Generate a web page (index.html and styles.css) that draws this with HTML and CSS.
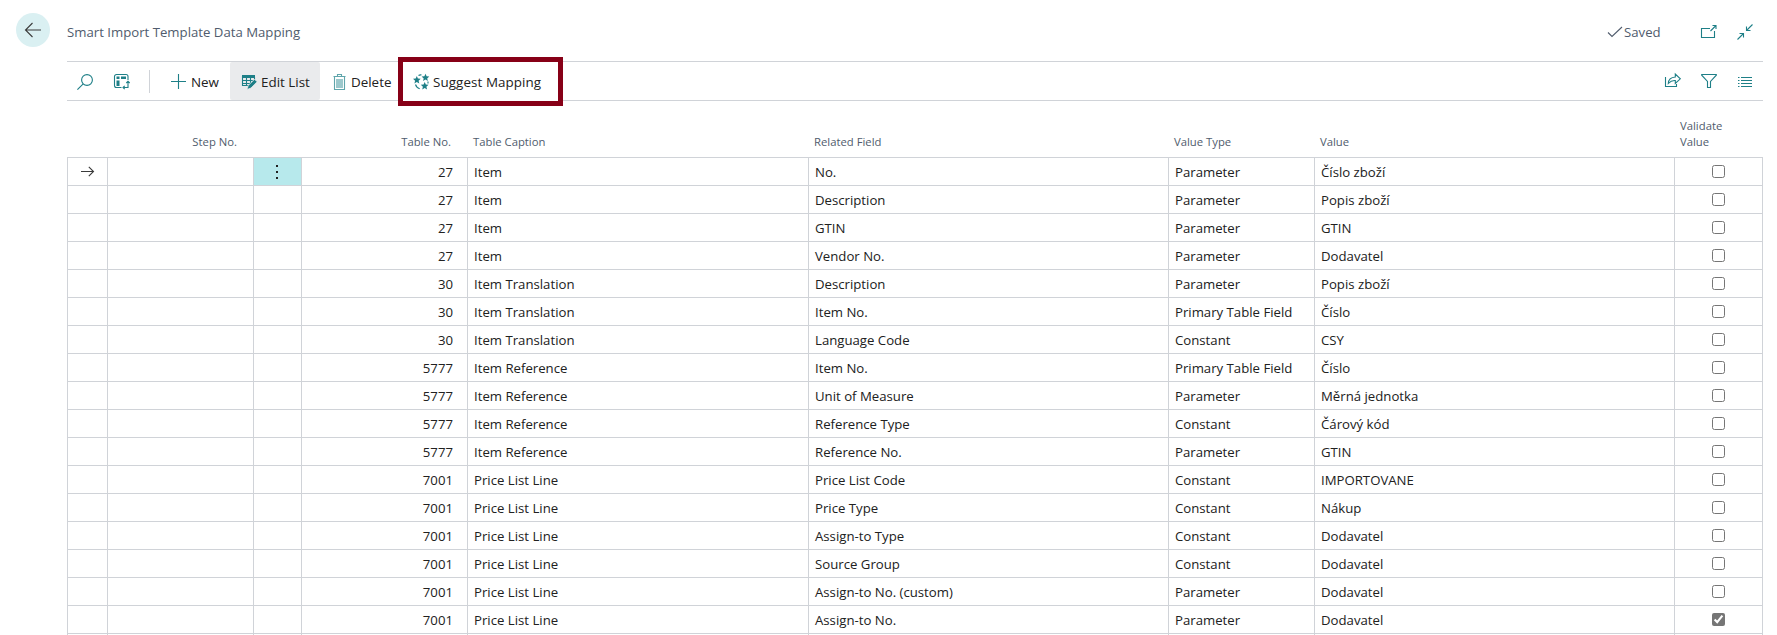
FILE: index.html
```
<!DOCTYPE html>
<html lang="en">
<head>
	<meta charset="UTF-8">
	<title>Smart Import Template Data Mapping</title>
	<link rel="stylesheet" href="styles.css">
</head>
<body>
	<header class="page-header">
		<a class="back">
			<svg width="18" height="16" viewBox="0 0 18 16"><path d="M17 8H1.5M8.5 1L1.5 8l7 7"/></svg>
		</a>
		<h1 class="title">Smart Import Template Data Mapping</h1>
		<div class="header-nav">
			<svg class="check" width="16" height="12" viewBox="0 0 16 12"><path d="M1 6.500L5 10.500L15 1"/></svg>
			<span class="saved">Saved</span>
			<svg class="icon popout" width="16" height="16" viewBox="0 0 16 16"><path d="M9 4.500H.5v9h13V7M9.500 7L15 1.500M11.500 1.500H15V5"/></svg>
			<svg class="icon" width="16" height="16" viewBox="0 0 16 16"><path d="M.5 15.500l6-6M2.500 9.500h4v4M15.500.5l-6 6M9.500 2.500v4h4"/></svg>
		</div>
	</header>

	<div class="toolbar">
		<a class="tool tool-search"><svg class="icon" width="16" height="16" viewBox="0 0 16 16"><circle cx="10" cy="6" r="5.400"/><path d="M6.200 9.800L.4 15.600"/></svg></a>
		<a class="tool tool-layout">
			<svg class="icon" width="16" height="16" viewBox="0 0 16 16">
				<path d="M7.500 13.500h-5a2 2 0 0 1-2-2v-9a2 2 0 0 1 2-2h9.500a2 2 0 0 1 2 2V6" />
				<path class="solid" d="M2.500 2.500h3v2.500h-3zM7 2.500h5v2.500H7zM2.500 6.500h3V12h-3z"/>
				<path d="M14 7.500v6H9M12.300 9l1.700-1.700L15.700 9M10.700 11.800L9 13.500l1.700 1.700"/>
			</svg>
		</a>
		<span class="divider"></span>
		<a class="tool tool-new"><svg class="icon" width="16" height="16" viewBox="0 0 16 16"><path d="M7.500 0v15M0 7.500h15"/></svg>New</a>
		<a class="tool tool-edit active">
			<svg class="icon" width="16" height="16" viewBox="0 0 16 16">
				<path class="solid" d="M1 1h13v3H1z"/>
				<path d="M1.500 2v9.500H7M5.500 4v7.500M9.500 4v6M13.500 3v3M1.500 6.500h11M1.500 9.500h8"/>
				<path class="pencil" d="M6 15.500l1.200-4 6.300-6.300 2.600 2.600-6.200 6.300z"/>
			</svg>Edit List
		</a>
		<a class="tool tool-delete">
			<svg class="icon bin" width="16" height="16" viewBox="0 0 16 16">
				<path class="fill" d="M5 5h7v9H5z"/>
				<path d="M3.500 3v12.500h10V3M2.500 2.500h12M6.500 2.500v-2h4v2"/>
			</svg>Delete
		</a>
		<a class="tool tool-suggest">
			<svg class="icon" width="16" height="16" viewBox="0 0 16 16">
				<path class="solid" d="M3.800 2l1.100 2.600 2.800.2-2.100 1.900.7 2.700-2.500-1.500-2.400 1.500.7-2.700L0 4.800l2.700-.2zM12.500-.3l1.100 2.600 2.700.2-2.100 1.900.7 2.700-2.400-1.500-2.500 1.500.7-2.700-2.100-1.900 2.800-.2zM11.700 8l1.100 2.600 2.700.2-2.100 1.900.7 2.700-2.400-1.500-2.500 1.500.7-2.700-2.100-1.900 2.800-.2z"/>
				<path d="M5.500 1.500Q7 .5 8.500 1M2.500 10.500q.8 3 4.200 4.200M15 7.500v2"/>
			</svg>Suggest Mapping
		</a>
		<div class="toolbar-right">
			<svg class="icon" width="16" height="16" viewBox="0 0 16 16"><path d="M.5 4v9.500h11V11M3.300 10.500q.2-6 7-6.500V1l5 4.800-5 4.700V7.500q-4-.4-7 3z"/></svg>
			<svg class="icon" width="16" height="16" viewBox="0 0 16 16"><path d="M.7 1.500h14.600v.7L9.500 8.500v6h-3v-6L.7 2.200z"/></svg>
			<svg class="icon" width="16" height="16" viewBox="0 0 16 16"><path d="M1 4.500h1.500M4 4.500h11M1 7.500h1.500M4 7.500h11M1 10.500h1.500M4 10.500h11M1 13.500h1.500M4 13.500h11"/></svg>
		</div>
	</div>

	<table class="lines">
		<colgroup>
			<col class="c-select"><col class="c-step"><col class="c-menu"><col class="c-table"><col class="c-caption"><col class="c-field"><col class="c-type"><col class="c-value"><col class="c-validate">
		</colgroup>
		<thead>
			<tr><th></th><th class="num step">Step No.</th><th></th><th class="num">Table No.</th><th>Table Caption</th><th>Related Field</th><th>Value Type</th><th>Value</th><th>Validate Value</th></tr>
		</thead>
		<tbody>
			<tr>
				<td class="mark"><svg width="14" height="12" viewBox="0 0 14 12"><path d="M0 5.500h12.500M7.800.8l4.700 4.700-4.700 4.700"/></svg></td>
				<td></td>
				<td class="menu"><svg width="4" height="16" viewBox="0 0 4 16"><path d="M1 1h2v2H1zM1 7h2v2H1zM1 13h2v2H1z"/></svg></td>
				<td class="num">27</td><td>Item</td><td>No.</td><td>Parameter</td><td>Číslo zboží</td><td class="val"><input type="checkbox"></td>
			</tr>
			<tr><td></td><td></td><td></td><td class="num">27</td><td>Item</td><td>Description</td><td>Parameter</td><td>Popis zboží</td><td class="val"><input type="checkbox"></td></tr>
			<tr><td></td><td></td><td></td><td class="num">27</td><td>Item</td><td>GTIN</td><td>Parameter</td><td>GTIN</td><td class="val"><input type="checkbox"></td></tr>
			<tr><td></td><td></td><td></td><td class="num">27</td><td>Item</td><td>Vendor No.</td><td>Parameter</td><td>Dodavatel</td><td class="val"><input type="checkbox"></td></tr>
			<tr><td></td><td></td><td></td><td class="num">30</td><td>Item Translation</td><td>Description</td><td>Parameter</td><td>Popis zboží</td><td class="val"><input type="checkbox"></td></tr>
			<tr><td></td><td></td><td></td><td class="num">30</td><td>Item Translation</td><td>Item No.</td><td>Primary Table Field</td><td>Číslo</td><td class="val"><input type="checkbox"></td></tr>
			<tr><td></td><td></td><td></td><td class="num">30</td><td>Item Translation</td><td>Language Code</td><td>Constant</td><td>CSY</td><td class="val"><input type="checkbox"></td></tr>
			<tr><td></td><td></td><td></td><td class="num">5777</td><td>Item Reference</td><td>Item No.</td><td>Primary Table Field</td><td>Číslo</td><td class="val"><input type="checkbox"></td></tr>
			<tr><td></td><td></td><td></td><td class="num">5777</td><td>Item Reference</td><td>Unit of Measure</td><td>Parameter</td><td>Měrná jednotka</td><td class="val"><input type="checkbox"></td></tr>
			<tr><td></td><td></td><td></td><td class="num">5777</td><td>Item Reference</td><td>Reference Type</td><td>Constant</td><td>Čárový kód</td><td class="val"><input type="checkbox"></td></tr>
			<tr><td></td><td></td><td></td><td class="num">5777</td><td>Item Reference</td><td>Reference No.</td><td>Parameter</td><td>GTIN</td><td class="val"><input type="checkbox"></td></tr>
			<tr><td></td><td></td><td></td><td class="num">7001</td><td>Price List Line</td><td>Price List Code</td><td>Constant</td><td>IMPORTOVANE</td><td class="val"><input type="checkbox"></td></tr>
			<tr><td></td><td></td><td></td><td class="num">7001</td><td>Price List Line</td><td>Price Type</td><td>Constant</td><td>Nákup</td><td class="val"><input type="checkbox"></td></tr>
			<tr><td></td><td></td><td></td><td class="num">7001</td><td>Price List Line</td><td>Assign-to Type</td><td>Constant</td><td>Dodavatel</td><td class="val"><input type="checkbox"></td></tr>
			<tr><td></td><td></td><td></td><td class="num">7001</td><td>Price List Line</td><td>Source Group</td><td>Constant</td><td>Dodavatel</td><td class="val"><input type="checkbox"></td></tr>
			<tr><td></td><td></td><td></td><td class="num">7001</td><td>Price List Line</td><td>Assign-to No. (custom)</td><td>Parameter</td><td>Dodavatel</td><td class="val"><input type="checkbox"></td></tr>
			<tr><td></td><td></td><td></td><td class="num">7001</td><td>Price List Line</td><td>Assign-to No.</td><td>Parameter</td><td>Dodavatel</td><td class="val"><input type="checkbox" checked></td></tr>
			<tr><td></td><td></td><td></td><td></td><td></td><td></td><td></td><td></td><td></td></tr>
		</tbody>
	</table>
</body>
</html>
```
FILE: styles.css
```
/*--reset--*/
* {
	box-sizing: border-box;
}
html, body {
	height: 100%;
	overflow: hidden;
}
body {
	margin: 0;
	padding: 0 14px 0 67px;
	background: #fff;
	color: #212121;
	font: 13.2px/18px "Segoe UI", "Open Sans", "Noto Sans", sans-serif;
}
svg {
	display: block;
	flex: none;
	fill: none;
	stroke: #3b3b3b;
	stroke-width: 1.1;
}
svg.icon {
	stroke: #1e7f87;
	overflow: visible;
}
svg .solid {
	fill: #1e7f87;
	stroke: none;
}

/**
 * header
 */
.page-header {
	display: flex;
	align-items: center;
	height: 61px;
	padding-top: 2px;
	color: #505c6d;
}
.back {
	display: flex;
	align-items: center;
	justify-content: center;
	width: 34px;
	height: 34px;
	margin: -3px 17px 0 -51px;
	border-radius: 50%;
	background: #daf0f2;
}
.title {
	margin: 0;
	font-size: 13.2px;
	font-weight: normal;
}
.header-nav {
	display: flex;
	align-items: center;
	margin-left: auto;
	padding-right: 10px;
}
.check {
	stroke: #505c6d;
}
.saved {
	width: 78px;
	padding-left: 1px;
}
.popout {
	margin-right: 20px;
}

/**
 * toolbar
 */
.toolbar {
	display: flex;
	height: 40px;
	border-top: 1px solid #d0d3d8;
	border-bottom: 1px solid #d0d3d8;
	font-size: 13.4px;
}
.tool {
	position: relative;
	display: flex;
	align-items: center;
	gap: 4px;
	padding-top: 1px;
	white-space: nowrap;
}
.tool-search {
	width: 36px;
	padding-left: 10px;
}
.tool-layout {
	width: 46px;
	padding-left: 11px;
}
.divider {
	width: 1px;
	height: 23px;
	margin: 8px 10px 0 0;
	background: #d0d3d8;
}
.tool-new {
	width: 70px;
	padding-left: 11px;
}
.tool-edit {
	width: 90px;
	padding-left: 11px;
}
.tool-delete {
	width: 78px;
	padding-left: 11px;
}
.tool-suggest {
	z-index: 1;
	width: 165px;
	padding-left: 15px;
	letter-spacing: .08px;
}
.tool.active {
	background: #eaebed;
	border-radius: 2px;
}
.pencil {
	fill: #1e7f87;
	stroke: #eaebed;
	stroke-width: .8;
}
svg.bin {
	stroke: #5fa5ab;
}
.bin .fill {
	fill: #9cc8cc;
	stroke: none;
}
/* highlight frame sticks out over the toolbar borders */
.tool-suggest::before {
	content: "";
	position: absolute;
	z-index: -1;
	inset: -5px 0 -6px;
	border: 5px solid #870017;
	background: #fff;
}
.toolbar-right {
	display: flex;
	align-items: center;
	gap: 20px;
	margin-left: auto;
	padding-right: 10px;
}

/**
 * lines
 */
.lines {
	width: 1696px;
	table-layout: fixed;
	border-collapse: separate;
	border-spacing: 0;
}
.c-select { width: 40px; }
.c-step { width: 146px; }
.c-menu { width: 48px; }
.c-table { width: 166px; }
.c-caption { width: 341px; }
.c-field { width: 360px; }
.c-type { width: 146px; }
.c-value { width: 360px; }
.c-validate { width: 89px; }
.lines th {
	height: 57px;
	padding: 0 16px 7px 6px;
	border-bottom: 1px solid #d0d3d8;
	color: #505c6d;
	font-size: 11.3px;
	line-height: 16px;
	font-weight: normal;
	text-align: left;
	vertical-align: bottom;
}
.lines td {
	height: 28px;
	padding: 0 6px;
	border-left: 1px solid #d0d3d8;
	border-bottom: 1px solid #d0d3d8;
	white-space: nowrap;
}
.lines td:last-child {
	border-right: 1px solid #d0d3d8;
}
.lines .num {
	text-align: right;
	padding-right: 14px;
}
.lines th.num {
	padding-right: 16px;
}
.lines td.mark {
	padding: 0 0 0 13px;
}
.lines td.menu {
	padding: 1px 0 0 21px;
	background: #b7e9ec;
}
.menu path {
	fill: #212121;
	stroke: none;
}
.lines td.val {
	padding: 0;
	text-align: center;
}
.val input {
	display: block;
	width: 13px;
	height: 13px;
	margin: 0 auto;
	accent-color: #767676;
}
```
